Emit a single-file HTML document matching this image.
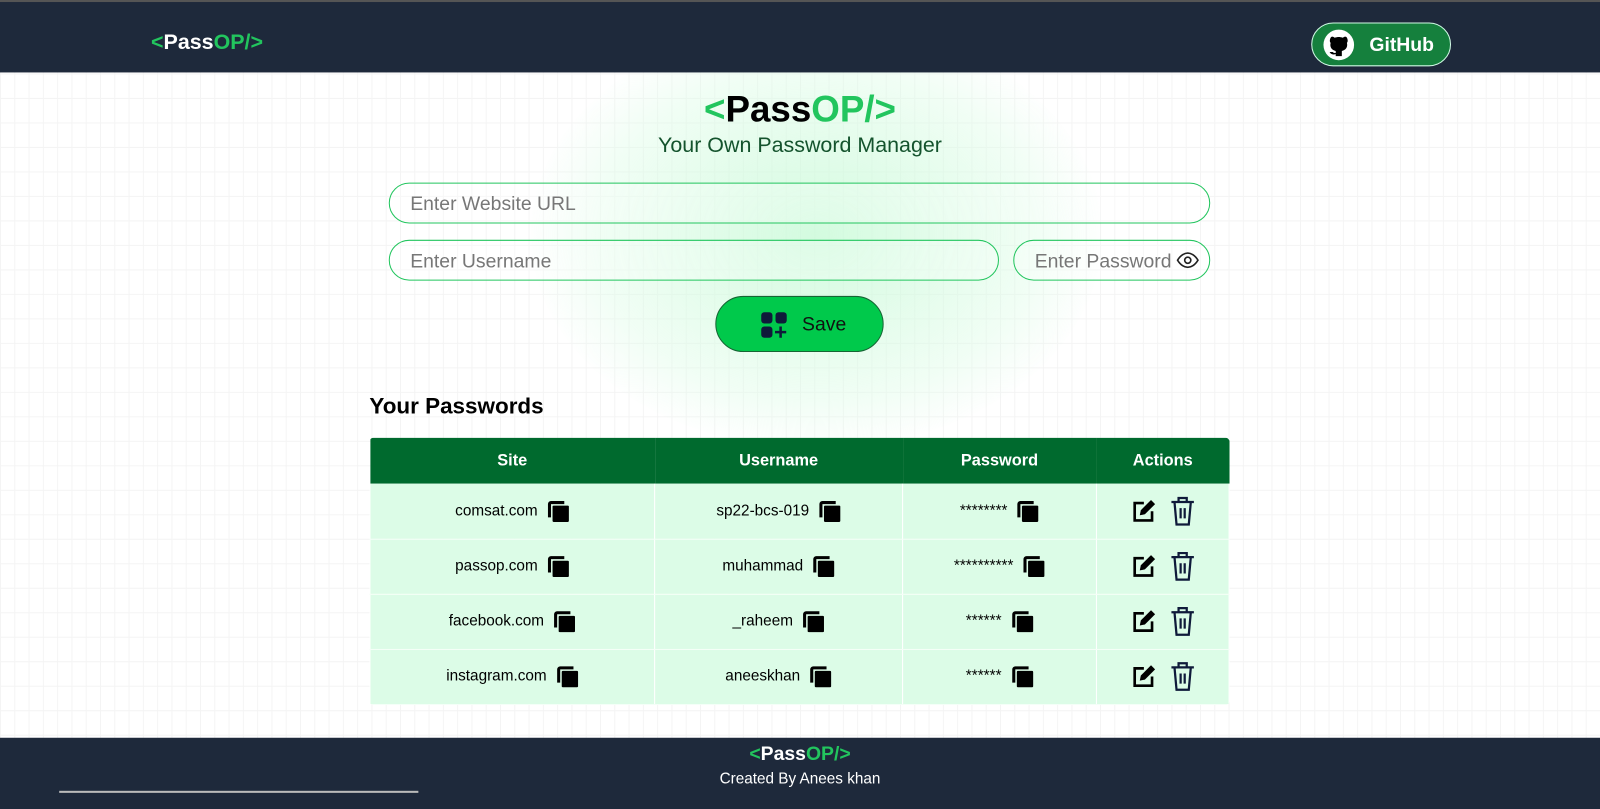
<!DOCTYPE html>
<html><head><meta charset="utf-8"><style>
*{box-sizing:border-box;margin:0;padding:0}
html,body{width:1600px;height:793px;overflow:hidden;background:#fff}
#w{position:absolute;left:0;top:0;width:1568px;height:777px;transform:scale(1.020408);transform-origin:0 0;font-family:"Liberation Sans",sans-serif;
background-image:linear-gradient(to right,#f4f4f4 1px,transparent 1px),linear-gradient(to bottom,#f4f4f4 1px,transparent 1px);background-size:14px 24px}
.glow{position:absolute;left:520px;top:20px;width:560px;height:420px;border-radius:50%;background:radial-gradient(ellipse at center,rgba(200,250,215,.8),rgba(220,252,230,.4) 55%,rgba(255,255,255,0) 72%)}
nav{position:absolute;left:0;top:0;width:1568px;height:71px;background:#1e293b;border-top:2px solid #555}
.logo{font-weight:bold}
.g{color:#22c55e}
nav .logo{position:absolute;left:148px;top:28px;font-size:21px;color:#fff}
.gh{position:absolute;left:1285px;top:20px;width:137px;height:43px;border:1.5px solid #d1fae5;border-radius:22px;background:#15803d;color:#fff;font-weight:bold;font-size:19px}
.gh span{position:absolute;left:56px;top:11px}
.gh svg{position:absolute;left:9px;top:5px}
.title{position:absolute;left:0;width:1568px;text-align:center}
.inp{position:absolute;height:40px;border:1px solid #22c55e;border-radius:22px;background:rgba(255,255,255,.25);color:#777;font-size:19px;padding:10px 20px}
.save{position:absolute;left:701px;top:290px;width:165px;height:55px;border:1px solid #166534;border-radius:28px;background:#00c94b;font-size:19px;color:#111}
table{position:absolute;left:362px;top:429px;width:843px;border-collapse:collapse;font-size:15px;border-radius:4px;overflow:hidden}
th{background:#006a2e;color:#fff;height:45px;font-weight:bold;font-size:16px}
td{background:#dcfce7;height:54px;text-align:center;border:1px solid #fff;border-top:none;border-bottom:1px solid #f4fff7}
td svg,th svg{vertical-align:middle}
.cp{display:inline-block;vertical-align:middle;margin-left:9px}
footer{position:absolute;left:0;top:723px;width:1568px;height:70px;background:#1e293b;color:#fff;text-align:center}
</style></head><body><div id="w">
<div class="glow"></div>
<nav><div class="logo"><span class="g">&lt;</span>Pass<span class="g">OP/&gt;</span></div>
<div class="gh"><svg width="34" height="32" viewBox="0 0 34 32"><circle cx="17" cy="16" r="15" fill="#fff"/><path d="M9 9c1-2 3-1 4 0 3-1 5-1 8 0 1-1 3-2 4 0 1 2 1 4 0 5 1 4-1 7-5 8v5h-6v-2c-3 1-5 0-6-2h3c1 1 2 1 3 1v-2c-4-1-6-4-5-8-1-1-1-3 0-5z" fill="#000"/></svg><span>GitHub</span></div></nav>

<div class="title logo" style="top:86px;font-size:36px;color:#000"><span class="g">&lt;</span>Pass<span class="g">OP/&gt;</span></div>
<div class="title" style="top:131px;font-size:21px;color:#14532d">Your Own Password Manager</div>

<div class="inp" style="left:381px;top:179px;width:805px">Enter Website URL</div>
<div class="inp" style="left:381px;top:235px;width:598px">Enter Username</div>
<div class="inp" style="left:993px;top:235px;width:193px">Enter Password
<svg style="position:absolute;right:10px;top:11px" width="22" height="16" viewBox="0 0 22 16"><path d="M1 8C4 3 8 1 11 1s7 2 10 7c-3 5-7 7-10 7S4 13 1 8z" fill="none" stroke="#222" stroke-width="1.6"/><circle cx="11" cy="8" r="3" fill="none" stroke="#222" stroke-width="1.6"/></svg></div>

<div class="save"><svg style="position:absolute;left:43px;top:14px" width="28" height="28" viewBox="0 0 28 28" fill="#0f1a3a"><rect x="1" y="1" width="11" height="11" rx="3"/><rect x="15" y="1" width="11" height="11" rx="3"/><rect x="1" y="15" width="11" height="11" rx="3"/><path d="M20 15v11M14.5 20.5h11" stroke="#0f1a3a" stroke-width="2.5"/></svg><span style="position:absolute;left:84px;top:17px">Save</span></div>

<div style="position:absolute;left:362px;top:385px;font-size:22px;font-weight:bold;color:#000">Your Passwords</div>

<table>
<tr><th style="width:279px">Site</th><th style="width:243px">Username</th><th style="width:190px">Password</th><th>Actions</th></tr>
<tr><td>comsat.com<span class="cp">C</span></td><td>sp22-bcs-019<span class="cp">C</span></td><td>********<span class="cp">C</span></td><td>A</td></tr>
<tr><td>passop.com<span class="cp">C</span></td><td>muhammad<span class="cp">C</span></td><td>**********<span class="cp">C</span></td><td>A</td></tr>
<tr><td>facebook.com<span class="cp">C</span></td><td>_raheem<span class="cp">C</span></td><td>******<span class="cp">C</span></td><td>A</td></tr>
<tr><td>instagram.com<span class="cp">C</span></td><td>aneeskhan<span class="cp">C</span></td><td>******<span class="cp">C</span></td><td>A</td></tr>
</table>

<footer><div class="logo" style="padding-top:6px;font-size:19px"><span class="g">&lt;</span>Pass<span class="g">OP/&gt;</span></div>
<div style="font-size:15px;margin-top:4px">Created By Anees khan</div></footer>
<div style="position:absolute;left:58px;top:775px;width:352px;height:2px;background:#bbb"></div>
</div>
<script>
var cp='<svg width="22" height="22" viewBox="0 0 22 22"><path d="M2.5 17V4a1.5 1.5 0 0 1 1.5-1.5h13" fill="none" stroke="#000" stroke-width="3"/><rect x="5.5" y="5.5" width="16" height="16" rx="1" fill="#000"/></svg>';
var act='<svg width="26" height="26" viewBox="0 0 26 26" style="margin-right:12px"><path d="M13 5H4v17h17v-9" fill="none" stroke="#000" stroke-width="2.6"/><path d="M9 17l1-5 10-10 4 4-10 10z" fill="#000"/></svg><svg width="26" height="30" viewBox="0 0 26 30"><path d="M2 6h22M9 6V2h8v4M5 6l2 22h12l2-22M11 12v10M15 12v10" fill="none" stroke="#0f1a3a" stroke-width="2.2"/></svg>';
document.querySelectorAll('.cp').forEach(function(e){e.innerHTML=cp});
document.querySelectorAll('td:last-child').forEach(function(e){e.innerHTML=act});
</script>
</body></html>
